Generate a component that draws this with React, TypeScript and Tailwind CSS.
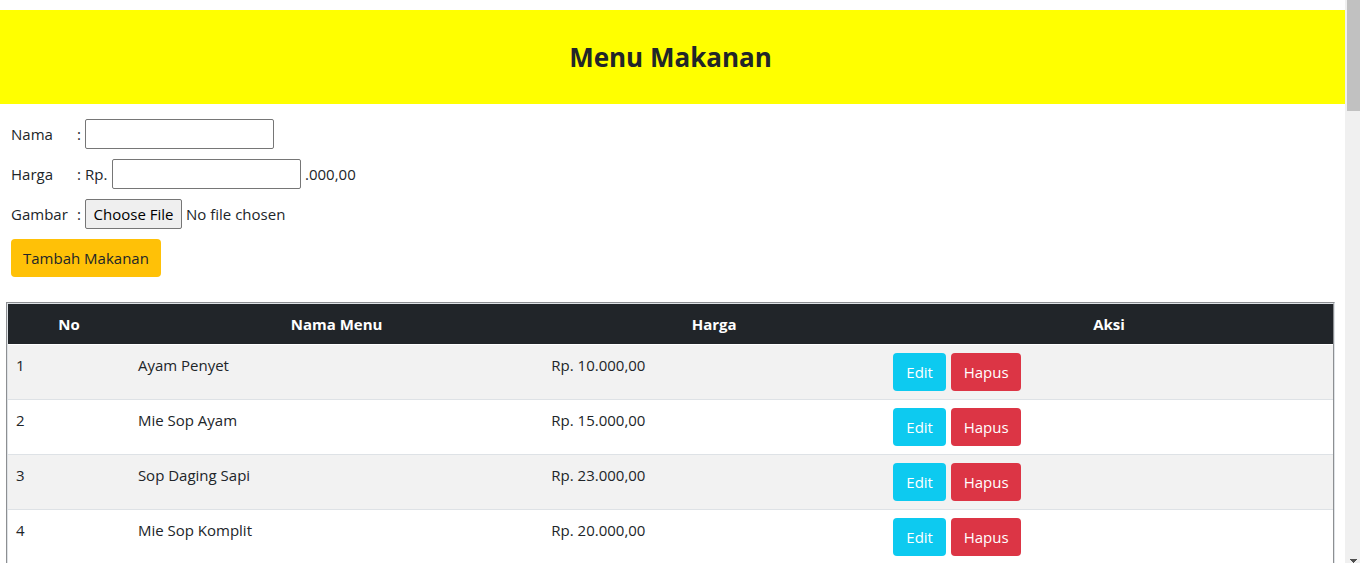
const menu = [
  { name: 'Ayam Penyet', price: 'Rp. 10.000,00' },
  { name: 'Mie Sop Ayam', price: 'Rp. 15.000,00' },
  { name: 'Sop Daging Sapi', price: 'Rp. 23.000,00' },
  { name: 'Mie Sop Komplit', price: 'Rp. 20.000,00' },
];

const textInput = 'h-[30px] w-[189px] rounded-[2px] border border-[#767676] bg-white px-1 text-black';
const label = 'w-[66px] shrink-0';
const actionButton = 'h-[38px] rounded text-center text-white';

function MenuForm() {
  return (
    <form className="flex flex-col items-start gap-[10px] px-[11px] pt-[15px]" onSubmit={(e) => e.preventDefault()}>
      <div className="flex h-[30px] items-center">
        <label htmlFor="nama" className={label}>Nama</label>
        <span className="w-2">:</span>
        <input id="nama" type="text" className={textInput} />
      </div>
      <div className="flex h-[30px] items-center">
        <label htmlFor="harga" className={label}>Harga</label>
        <span className="w-2">:</span>
        <span className="w-[27px]">Rp.</span>
        <input id="harga" type="text" className={textInput} />
        <span className="pl-1">.000,00</span>
      </div>
      <div className="flex h-[30px] items-center">
        <label htmlFor="gambar" className={label}>Gambar</label>
        <span className="w-2">:</span>
        <input
          id="gambar"
          type="file"
          className="h-[30px] file:mr-1 file:box-border file:h-[30px] file:w-[97px] file:rounded-[2px] file:border file:border-solid file:border-[#767676] file:bg-[#efefef] file:p-0 file:text-center file:text-black"
        />
      </div>
      <button type="submit" className="h-[38px] rounded bg-[#ffc107] px-3 text-[#212529]">
        Tambah Makanan
      </button>
    </form>
  );
}

function MenuTable() {
  return (
    <div className="mt-[25px] mr-[10px] ml-[6px] border-2 border-[#dee2e6] [border-style:groove]">
      <table className="w-full table-fixed border-separate border-spacing-0">
        <colgroup>
          <col className="w-[9.2%]" />
          <col className="w-[31.2%]" />
          <col className="w-[25.8%]" />
          <col className="w-[33.8%]" />
        </colgroup>
        <thead>
          <tr className="h-[41px] bg-[#212529] text-white">
            <th className="border-b border-white p-2 font-bold">No</th>
            <th className="border-b border-white p-2 font-bold">Nama Menu</th>
            <th className="border-b border-white p-2 font-bold">Harga</th>
            <th className="border-b border-white p-2 font-bold">Aksi</th>
          </tr>
        </thead>
        <tbody>
          {menu.map((item, i) => (
            <tr key={item.name} className="align-top odd:bg-[#f2f2f2]">
              <td className="border-b border-[#dee2e6] p-2">{i + 1}</td>
              <td className="border-b border-[#dee2e6] p-2">{item.name}</td>
              <td className="border-b border-[#dee2e6] p-2">{item.price}</td>
              <td className="border-b border-[#dee2e6] p-2">
                <div className="flex gap-[5px]">
                  <button type="button" className={actionButton + ' w-[53px] bg-[#0dcaf0]'}>Edit</button>
                  <button type="button" className={actionButton + ' w-[70px] bg-[#dc3545]'}>Hapus</button>
                </div>
              </td>
            </tr>
          ))}
        </tbody>
      </table>
    </div>
  );
}

function ScrollBar() {
  return (
    <div className="flex w-[15px] shrink-0 flex-col justify-between bg-[#f0f0f0] pl-[2px]" aria-hidden="true">
      <div className="h-[111px] bg-[#c1c1c1]" />
      <svg className="ml-[3px] h-1 w-[7px]" viewBox="0 0 7 4" shapeRendering="crispEdges">
        <path d="M0 0h7v1H6v1H5v1H4v1H3V3H2V2H1V1H0z" fill="#505050" />
      </svg>
    </div>
  );
}

export default function App() {
  return (
    <div className="flex h-screen overflow-hidden bg-white font-['Open_Sans','Noto_Sans',sans-serif] text-[15px] leading-6 text-[#212529]">
      <main className="min-w-0 flex-1 overflow-hidden">
        <header className="mt-[10px] flex h-[94px] items-center justify-center bg-[#ffff00] pr-1">
          <h1 className="text-[26px] leading-8 font-bold">Menu Makanan</h1>
        </header>
        <MenuForm />
        <MenuTable />
      </main>
      <ScrollBar />
    </div>
  );
}
